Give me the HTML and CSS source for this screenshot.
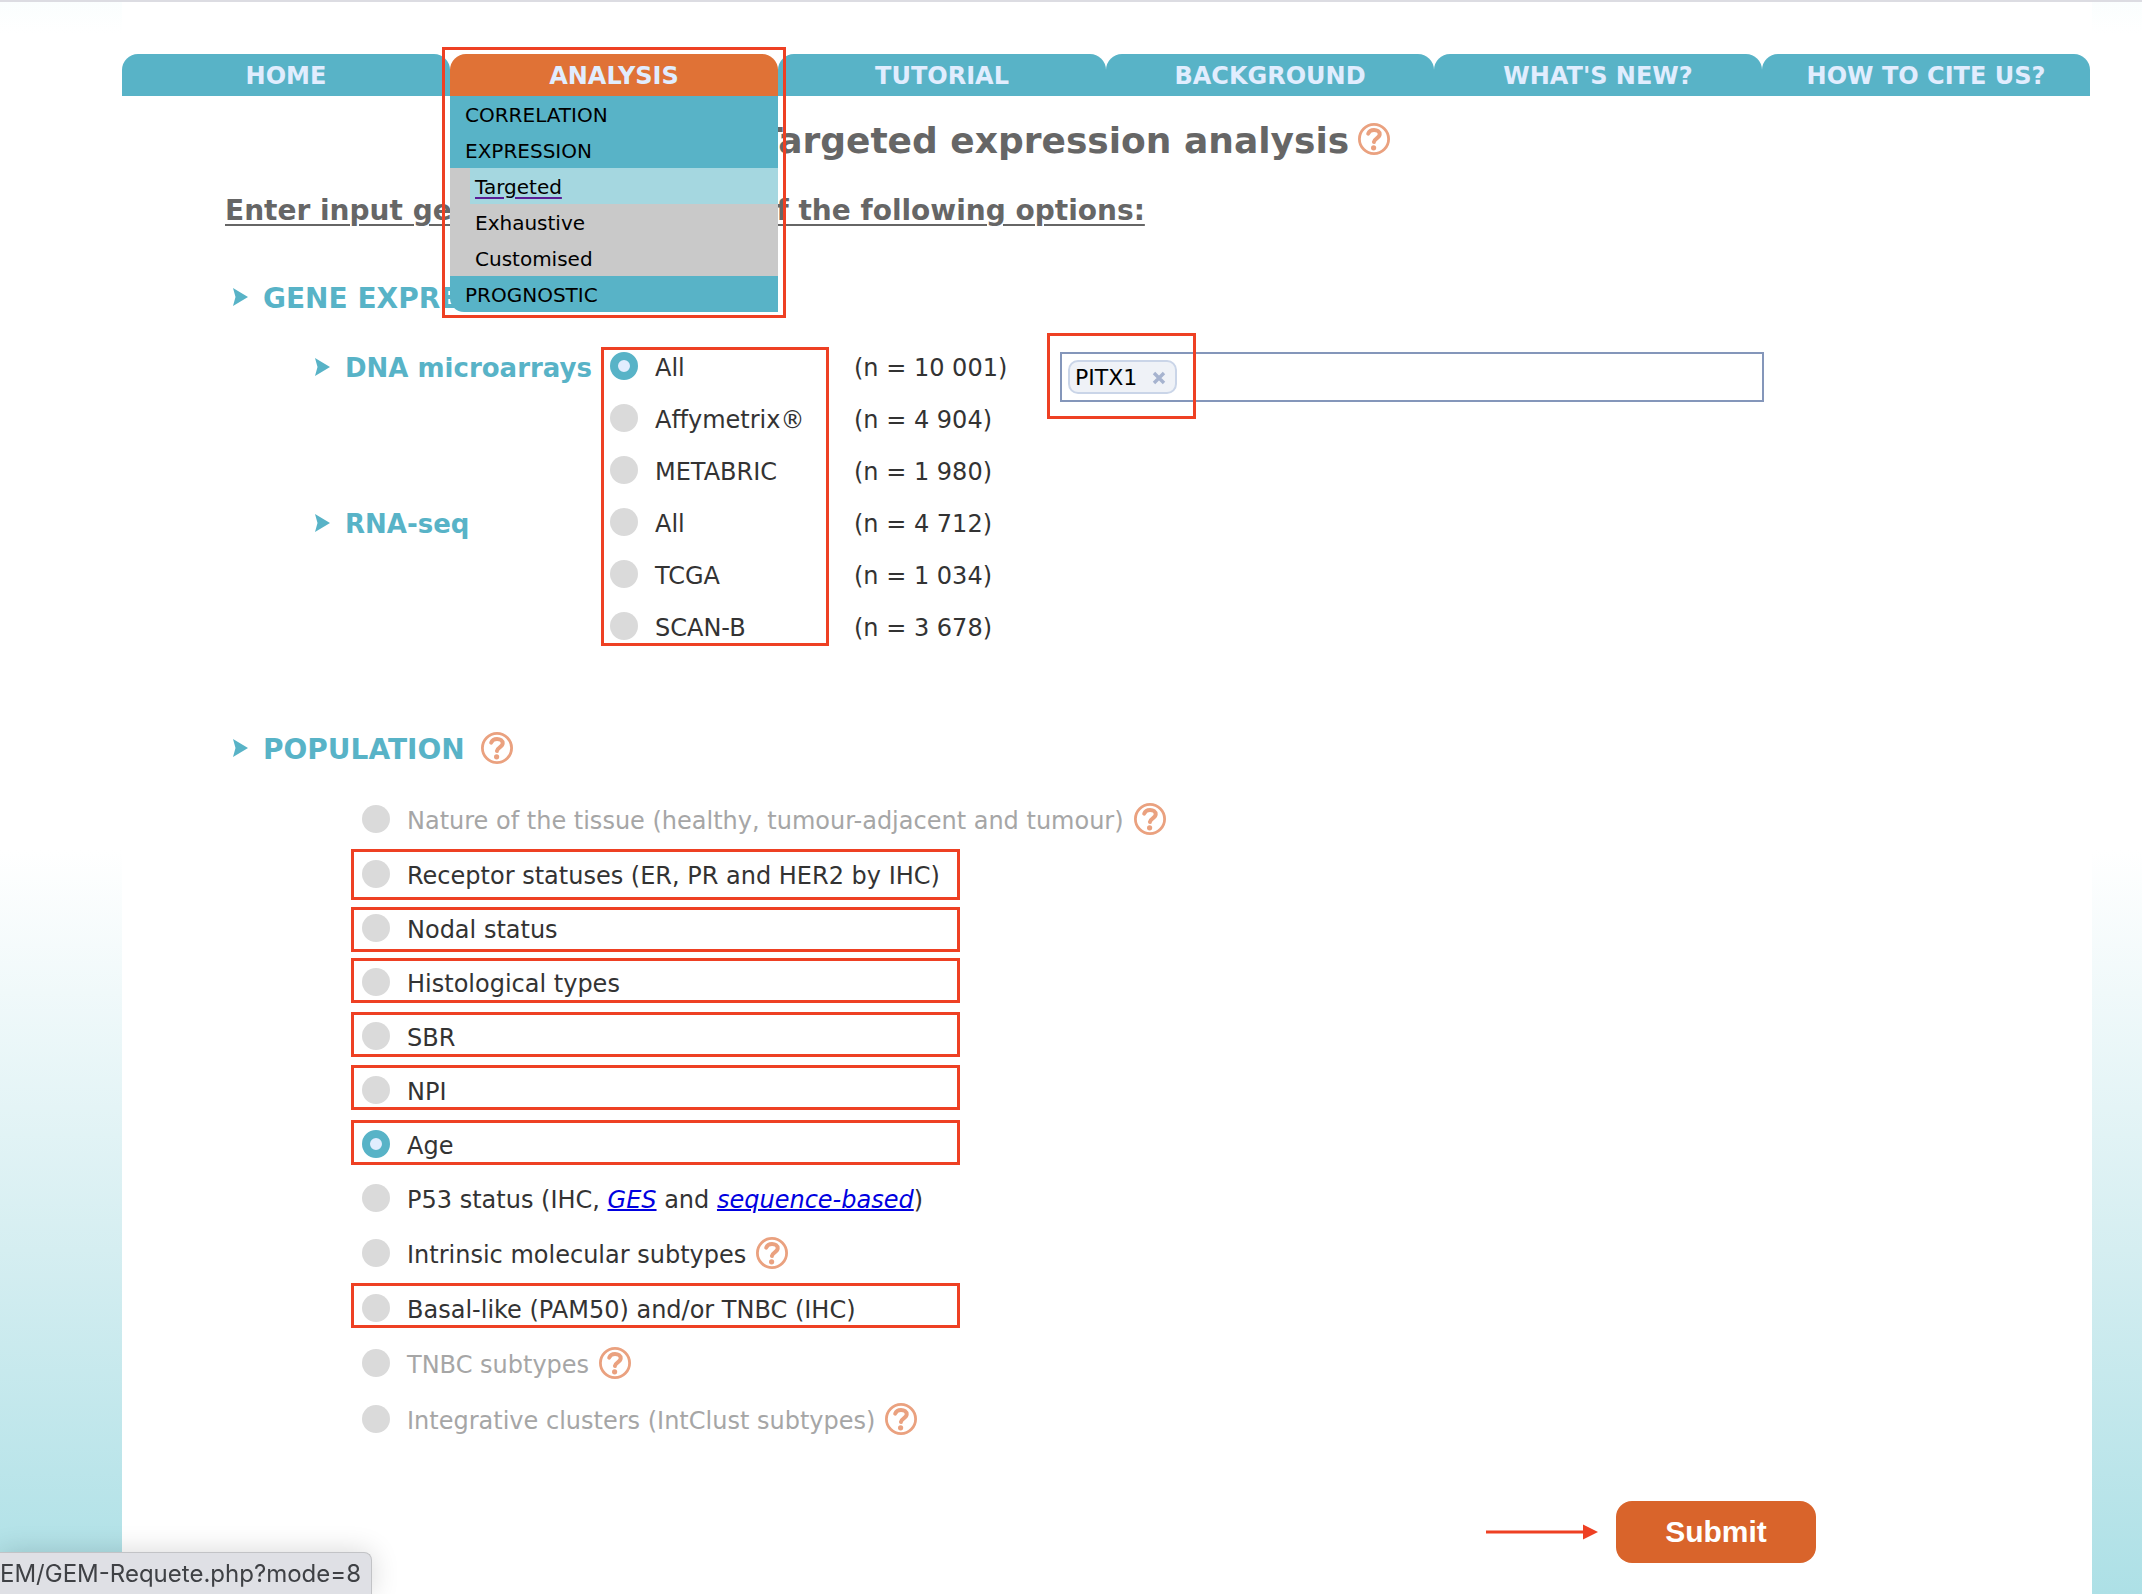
FILE: index.html
```html
<!DOCTYPE html>
<html lang="en">
<head>
<meta charset="utf-8">
<title>Targeted expression analysis</title>
<link rel="stylesheet" href="styles.css">
</head>
<body>
<svg class="defs" aria-hidden="true">
  <symbol id="help" viewBox="0 0 32 32">
    <circle cx="16" cy="16" r="14.6" fill="none" stroke="#eaa17f" stroke-width="2.8"/>
    <path d="M10.2 10.600C11.200 8 13.400 6.900 16 6.900c3.300 0 5.700 1.700 5.700 4.300 0 3.900-5.500 4.200-5.800 7.800" fill="none" stroke="#eaa17f" stroke-width="4" stroke-linecap="round"/>
    <circle cx="15.600" cy="24.800" r="2.600" fill="#eaa17f"/>
  </symbol>
  <symbol id="chevron" viewBox="0 0 15 18">
    <path d="M0 0 15 9 0 18 2.500 9z" fill="#58b3c7"/>
  </symbol>
</svg>
<div class="page">
  <nav class="tabs">
    <div class="tab"><a href="#home">HOME</a></div>
    <div class="tab tab-active">
      <a href="#analysis">ANALYSIS</a>
      <ul class="menu">
        <li><a href="#correlation">CORRELATION</a></li>
        <li><a href="#expression">EXPRESSION</a>
          <ul class="submenu">
            <li><a class="current" href="#targeted"><span>Targeted</span></a></li>
            <li><a href="#exhaustive">Exhaustive</a></li>
            <li><a href="#customised">Customised</a></li>
          </ul>
        </li>
        <li><a href="#prognostic">PROGNOSTIC</a></li>
      </ul>
      <span class="mark mark-menu"></span>
    </div>
    <div class="tab"><a href="#tutorial">TUTORIAL</a></div>
    <div class="tab"><a href="#background">BACKGROUND</a></div>
    <div class="tab"><a href="#news">WHAT'S NEW?</a></div>
    <div class="tab"><a href="#cite">HOW TO CITE US?</a></div>
  </nav>
  <main>
    <h1>Targeted expression analysis <svg class="help"><use href="#help"/></svg></h1>
    <h2 class="intro">Enter input gene and choose one of the following options:</h2>
    <form>
      <h3><svg class="chevron"><use href="#chevron"/></svg>GENE EXPRESSION DATA</h3>
      <div class="datasets">
        <h4 class="dna"><svg class="chevron"><use href="#chevron"/></svg>DNA microarrays</h4>
        <h4 class="rna"><svg class="chevron"><use href="#chevron"/></svg>RNA-seq</h4>
        <div class="choices">
          <label><input type="radio" name="data" checked>All</label>
          <label><input type="radio" name="data">Affymetrix®</label>
          <label><input type="radio" name="data">METABRIC</label>
          <label><input type="radio" name="data">All</label>
          <label><input type="radio" name="data">TCGA</label>
          <label><input type="radio" name="data">SCAN-B</label>
          <span class="mark mark-choices"></span>
        </div>
        <div class="counts">
          <span>(n = 10 001)</span>
          <span>(n = 4 904)</span>
          <span>(n = 1 980)</span>
          <span>(n = 4 712)</span>
          <span>(n = 1 034)</span>
          <span>(n = 3 678)</span>
        </div>
        <div class="genes">
          <span class="token">PITX1<button type="button" aria-label="Remove PITX1"><svg viewBox="0 0 14 14"><path d="M2 2 12 12M12 2 2 12" stroke="#a6b3cf" stroke-width="3.400"/></svg></button></span>
          <input type="text" aria-label="Gene symbol">
          <span class="mark mark-gene"></span>
        </div>
      </div>
      <h3><svg class="chevron"><use href="#chevron"/></svg>POPULATION<svg class="help"><use href="#help"/></svg></h3>
      <div class="population">
        <div class="row off"><label><input type="radio" name="pop" disabled>Nature of the tissue (healthy, tumour-adjacent and tumour)</label><svg class="help"><use href="#help"/></svg></div>
        <div class="row"><label><input type="radio" name="pop">Receptor statuses (ER, PR and HER2 by IHC)</label><span class="mark mark-row mark-tall"></span></div>
        <div class="row"><label><input type="radio" name="pop">Nodal status</label><span class="mark mark-row mark-low"></span></div>
        <div class="row"><label><input type="radio" name="pop">Histological types</label><span class="mark mark-row"></span></div>
        <div class="row"><label><input type="radio" name="pop">SBR</label><span class="mark mark-row"></span></div>
        <div class="row"><label><input type="radio" name="pop">NPI</label><span class="mark mark-row mark-high"></span></div>
        <div class="row"><label><input type="radio" name="pop" checked>Age</label><span class="mark mark-row"></span></div>
        <div class="row"><label><input type="radio" name="pop"><span>P53 status (IHC, <a href="#ges">GES</a> and <a href="#sequence">sequence-based</a>)</span></label></div>
        <div class="row"><label><input type="radio" name="pop">Intrinsic molecular subtypes</label><svg class="help"><use href="#help"/></svg></div>
        <div class="row"><label><input type="radio" name="pop">Basal-like (PAM50) and/or TNBC (IHC)</label><span class="mark mark-row mark-high"></span></div>
        <div class="row off"><label><input type="radio" name="pop" disabled>TNBC subtypes</label><svg class="help"><use href="#help"/></svg></div>
        <div class="row off"><label><input type="radio" name="pop" disabled>Integrative clusters (IntClust subtypes)</label><svg class="help"><use href="#help"/></svg></div>
      </div>
      <div class="actions">
        <svg class="arrow" viewBox="0 0 112 16"><path d="M0 8h98" stroke="#ee4023" stroke-width="3"/><path d="M97 0.500 112 8 97 15.500z" fill="#ee4023"/></svg>
        <button class="submit" type="submit">Submit</button>
      </div>
    </form>
  </main>
</div>
<div class="status">EM/GEM-Requete.php?mode=8</div>
</body>
</html>
```
FILE: styles.css
```css
* { box-sizing: border-box; }

body {
  margin: 0;
  min-height: 100vh;
  padding: 0 50px 0 122px;
  border-top: 2px solid #dcdce2;
  background: linear-gradient(#fafefe, #fff 34px, #fff 850px, #d5eef1 1250px, #ade0e6 1594px);
  font-family: Verdana, "DejaVu Sans", sans-serif;
  font-size: 24px;
  line-height: 32px;
  color: #333;
}

.defs { position: absolute; width: 0; height: 0; }

.page {
  min-height: calc(100vh - 2px);
  padding-top: 52px;
  background: #fff;
}

ul { list-style: none; margin: 0; padding: 0; }
a { text-decoration: none; }
h1, h2, h3, h4 { margin: 0; }

.mark {
  position: absolute;
  border: 3px solid #ee4023;
  pointer-events: none;
}

/* navigation */
.tabs {
  display: grid;
  grid-template-columns: repeat(6, 1fr);
  padding-right: 2px;
}
.tab { position: relative; }
.tab > a {
  display: block;
  height: 42px;
  border-radius: 16px 16px 0 0;
  background: #58b3c7;
  color: #e1edfe;
  font-weight: bold;
  line-height: 44px;
  text-align: center;
}
.tab-active > a { background: #e07236; }
.menu {
  position: absolute;
  z-index: 1;
  top: 42px;
  left: 0;
  right: 0;
  overflow: hidden;
  border-radius: 0 0 0 14px;
  background: #58b3c7;
  font-size: 20px;
}
.menu a {
  display: block;
  padding: 2px 0 0 15px;
  line-height: 34px;
  color: #000;
}
.submenu { padding-left: 20px; background: #c9c9c9; }
.submenu a { padding-left: 5px; }
.submenu .current { background: #a5d7e0; }
.current span { text-decoration: underline 2px #5a1e96; text-underline-offset: 3px; }
.mark-menu { z-index: 2; top: -7px; left: -8px; right: -8px; height: 271px; }

/* headings */
h1 {
  padding: 23px 66px 0 0;
  font-size: 36px;
  line-height: 44px;
  text-align: center;
  color: #666;
}
h1 .help { margin-left: -4px; vertical-align: -2px; }
.help { flex: none; width: 32px; height: 32px; }
.chevron { flex: none; width: 15px; height: 18px; }
.intro {
  padding: 30px 0 0 103px;
  font-size: 28px;
  line-height: 36px;
  color: #666;
  text-decoration: underline 2px;
  text-underline-offset: 4px;
}
h3 {
  display: flex;
  align-items: center;
  height: 36px;
  padding: 3px 0 0 111px;
  font-size: 28px;
  color: #58b3c7;
}
h3 .chevron { margin: 0 15px 3px 0; }
h3 .help { margin: 0 0 3px 16px; }
form { padding-top: 50px; }

/* data sets */
.datasets {
  display: grid;
  grid-template-columns: 295px 244px 206px 704px;
  grid-template-rows: repeat(6, 52px);
  padding: 25px 0 0 193px;
  margin-bottom: 78px;
}
h4 {
  display: flex;
  align-items: center;
  gap: 15px;
  grid-column: 1;
  padding-top: 4px;
  font-size: 26px;
  white-space: nowrap;
  color: #58b3c7;
}
h4 .chevron { margin-bottom: 2px; }
.dna { grid-row: 1; }
.rna { grid-row: 4; }
.choices, .counts { position: relative; display: grid; grid-auto-rows: 52px; grid-row: 1 / 7; }
.choices { grid-column: 2; }
.counts { grid-column: 3; align-items: center; }
.counts span, label { padding-top: 3px; }
label { display: flex; align-items: center; gap: 17px; }
.mark-choices { top: 7px; left: -9px; width: 228px; height: 299px; }

input[type="radio"] {
  appearance: none;
  flex: none;
  width: 28px;
  height: 28px;
  margin: 0 0 3px;
  border-radius: 50%;
  background: #dadada;
}
input[type="radio"]:checked { border: 8px solid #58b3c7; background: #e1edfe; }

.genes {
  position: relative;
  display: flex;
  align-items: center;
  grid-row: 1;
  grid-column: 4;
  height: 50px;
  margin-top: 12px;
  padding-left: 6px;
  border: 2px solid #8496ba;
}
.genes input { flex: 1; min-width: 0; height: 40px; border: 0; outline: 0; background: none; font: inherit; }
.token {
  display: flex;
  align-items: center;
  gap: 15px;
  height: 34px;
  padding: 2px 9px 0 5px;
  border: 2px solid #cad5e8;
  border-radius: 10px;
  background: #eff2f7;
  color: #000;
  font-size: 22px;
}
.token button { display: flex; width: 14px; height: 14px; padding: 0; border: 0; background: none; }
.mark-gene { top: -21px; left: -15px; width: 149px; height: 86px; }

/* population */
.population { padding: 25px 0 0 240px; }
.row { position: relative; display: flex; align-items: center; gap: 10px; min-height: 54px; }
.row:has(.help) { min-height: 56px; }
.row a { color: #0000e0; font-style: italic; text-decoration: underline 2px; }
.off { color: #a6a6a6; }
.mark-row { top: 3px; left: -11px; width: 609px; height: 45px; }
.mark-tall { top: 2px; height: 51px; }
.mark-low { top: 6px; }
.mark-high { top: 2px; }

/* submit */
.actions {
  display: flex;
  align-items: center;
  justify-content: flex-end;
  gap: 18px;
  padding: 54px 276px 0 0;
}
.arrow { width: 112px; height: 16px; }
.submit {
  width: 200px;
  height: 62px;
  border: 0;
  border-radius: 16px;
  background: #d9642b;
  color: #fff;
  font: bold 30px "Liberation Sans", Arial, sans-serif;
}

.status {
  position: fixed;
  left: 0;
  bottom: 0;
  width: 372px;
  height: 42px;
  border: 1px solid #c2c3c6;
  border-width: 1px 1px 0 0;
  border-radius: 0 8px 0 0;
  background: #dfe0e5;
  box-shadow: 0 0 28px rgba(0, 0, 0, 0.16);
  font: 24px/42px Inter, sans-serif;
  color: #3f4145;
  white-space: nowrap;
}
```
